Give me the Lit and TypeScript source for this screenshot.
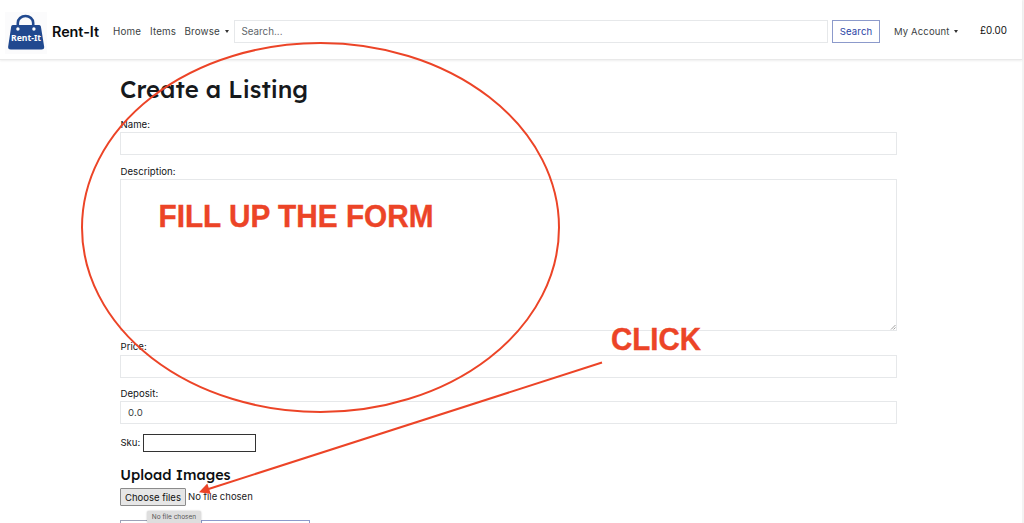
import { LitElement, html, css } from "lit";
import { customElement, property } from "lit/decorators.js";

@customElement("site-nav")
class SiteNav extends LitElement {
  static styles = css`
    :host { display: block; }
    .bar { box-sizing: border-box; height: 60px; display: flex; align-items: center; padding: 4px 15px 0 5px; border-bottom: 1px solid #e9e9e9; box-shadow: 0 1px 2px #00000012; color: #3c3f43; font-size: 9.8px; letter-spacing: 0.15px; white-space: nowrap; }
    .logo { width: 42px; height: 42px; display: block; flex: none; margin-top: 2px; }
    .logo text { font: 700 8.8px "Noto Sans", sans-serif; fill: #fff; letter-spacing: 0; }
    .brand { width: 61px; font-size: 14.4px; font-weight: 600; color: #0b0c0e; margin-left: 5px; letter-spacing: -0.05px; }
    .home { width: 37px; }
    .items { width: 34.5px; }
    .browse { width: 49px; display: flex; align-items: center; gap: 5px; }
    .caret { border: 2.8px solid transparent; border-top: 3px solid #333; border-bottom: 0; }
    .search { box-sizing: border-box; flex: 1; height: 23px; border: 1px solid #e6e8ea; padding: 0 7px; line-height: 22px; color: #60656a; letter-spacing: 0; }
    .button { box-sizing: border-box; width: 48px; height: 23px; margin-left: 4px; border: 1px solid #8c9acb; color: #2a44a5; text-align: center; line-height: 22px; font-size: 9.6px; }
    .account { margin-left: 14px; width: 86px; display: flex; align-items: center; gap: 2.5px; font-size: 9.5px; }
    .account .caret { margin-left: 1.5px; }
    .total { width: 27px; color: #111; letter-spacing: 0; font-size: 9.8px; line-height: 12px; padding-bottom: 1px; }
  `;
  render() {
    return html`<nav class="bar">
      <svg class="logo" viewBox="0 0 42 42">
        <rect width="42" height="42" fill="#fbfbfc" />
        <path d="M12.8 14.5V11a7.7 7 0 0 1 15.4 0V14.5" fill="none" stroke="#21498f" stroke-width="2.6" />
        <path d="M7.8 13H34.2Q35.6 13 35.9 14.5L39.2 35Q39.2 37.5 36.5 37.5H5.7Q3.1 37.5 3.1 35L6.2 14.5Q6.4 13 7.8 13Z" fill="#21498f" />
        <circle cx="12.9" cy="17" r="1.7" fill="#fff" /><circle cx="28.9" cy="17" r="1.7" fill="#fff" />
        <text x="6" y="29.2" textLength="30" lengthAdjust="spacingAndGlyphs">Rent-It</text>
      </svg>
      <span class="brand">Rent-It</span>
      <span class="home">Home</span><span class="items">Items</span>
      <span class="browse">Browse <i class="caret"></i></span>
      <div class="search">Search...</div><div class="button">Search</div>
      <span class="account">My Account <i class="caret"></i></span>
      <span class="total">£0.00</span>
    </nav>`;
  }
}

@customElement("form-field")
class FormField extends LitElement {
  @property() label = "";
  @property() value = "";
  @property({ type: Boolean, reflect: true }) tall = false;
  static styles = css`
    :host { display: block; margin-bottom: 9.4px; }
    .label { height: 14.2px; line-height: 14px; padding-left: 0.5px; }
    .box { box-sizing: border-box; height: 23px; border: 1px solid #e6e8ea; padding: 0 7px; line-height: 22px; color: #3c3f43; letter-spacing: 0.2px; }
    :host([tall]) .box { height: 152.3px; display: flex; align-items: flex-end; justify-content: flex-end; padding: 0; }
    .grip { width: 7px; height: 7px; display: block; }
  `;
  render() {
    return html`<div class="label">${this.label}</div>
      <div class="box">${this.tall
        ? html`<svg class="grip" viewBox="0 0 7 7"><path d="M2 6.5 6.5 2M4.5 6.5 6.5 4.5" stroke="#888" stroke-width=".8" /></svg>`
        : this.value}</div>`;
  }
}

@customElement("app-root")
class AppRoot extends LitElement {
  static styles = css`
    :host { display: block; position: relative; width: 1024px; height: 523px; overflow: hidden; background: #fff; font-family: Inter, sans-serif; box-sizing: border-box; }
    .page { box-sizing: border-box; height: 523px; border-right: 2px solid #f3f3f3; }
    .content { width: 777px; padding: 14px 0 0 120px; font-size: 9.6px; letter-spacing: 0.03px; color: #111315; }
    h1 { margin: 0 0 14px; height: 30px; line-height: 30px; font-family: Lexend, Inter, sans-serif; font-size: 24px; font-weight: 500; letter-spacing: 0; color: #16191c; }
    h2 { margin: 14.2px 0 4px; height: 18px; line-height: 18px; font-family: Lexend, Inter, sans-serif; font-size: 14.4px; font-weight: 500; letter-spacing: 0; padding-left: 0.3px; color: #0d0f11; }
    .sku { display: flex; align-items: center; gap: 2.6px; height: 18px; padding-left: 0.4px; }
    .sku-box { box-sizing: border-box; width: 113px; height: 18px; border: 1px solid #333; }
    .files { display: flex; align-items: center; gap: 2px; height: 18px; font-size: 9.5px; line-height: 19px; letter-spacing: 0; color: #222; }
    .choose { box-sizing: border-box; width: 66px; height: 18px; border: 1px solid #8b8b8b; border-radius: 1px; background: #e6e6e6; color: #111; line-height: 17px; text-align: center; }
    .actions { display: flex; gap: 4px; margin-top: 14.4px; }
    .action { box-sizing: border-box; height: 23px; width: 77px; border: 1px solid #9da2b8; }
    .action.wide { width: 109px; border-color: #8c9acb; }
    .tip { position: absolute; left: 147px; top: 511px; width: 54px; height: 12px; border-radius: 2px; background: #dedede; box-shadow: 0 0 2px #0004; color: #555; font-size: 6.5px; line-height: 12px; text-align: center; white-space: nowrap; }
    .marks { position: absolute; left: 0; top: 0; width: 1024px; height: 523px; pointer-events: none; }
    .marks text { font: 700 31px "Liberation Sans", sans-serif; fill: #ec4427; stroke: #ec4427; stroke-width: .4; }
  `;
  render() {
    return html`<div class="page">
        <site-nav></site-nav>
        <main class="content">
          <h1>Create a Listing</h1>
          <form-field label="Name:"></form-field>
          <form-field label="Description:" tall></form-field>
          <form-field label="Price:"></form-field>
          <form-field label="Deposit:" value="0.0"></form-field>
          <div class="sku">Sku: <div class="sku-box"></div></div>
          <h2>Upload Images</h2>
          <div class="files"><div class="choose">Choose files</div><span>No file chosen</span></div>
          <div class="actions"><div class="action"></div><div class="action wide"></div></div>
        </main>
      </div>
      <div class="tip">No file chosen</div>
      <svg class="marks" viewBox="0 0 1024 523">
        <ellipse cx="320.5" cy="227.5" rx="238.5" ry="184.5" fill="none" stroke="#ec4427" stroke-width="2" />
        <path d="M602 362.5 207 489.5" stroke="#ec4427" stroke-width="2" />
        <path d="M199 492.3 207.3 483.5 210.8 494Z" fill="#ec4427" />
        <text x="158.5" y="226.5" textLength="275" lengthAdjust="spacingAndGlyphs">FILL UP THE FORM</text>
        <text x="611" y="349.5" textLength="90" lengthAdjust="spacingAndGlyphs">CLICK</text>
      </svg>`;
  }
}
